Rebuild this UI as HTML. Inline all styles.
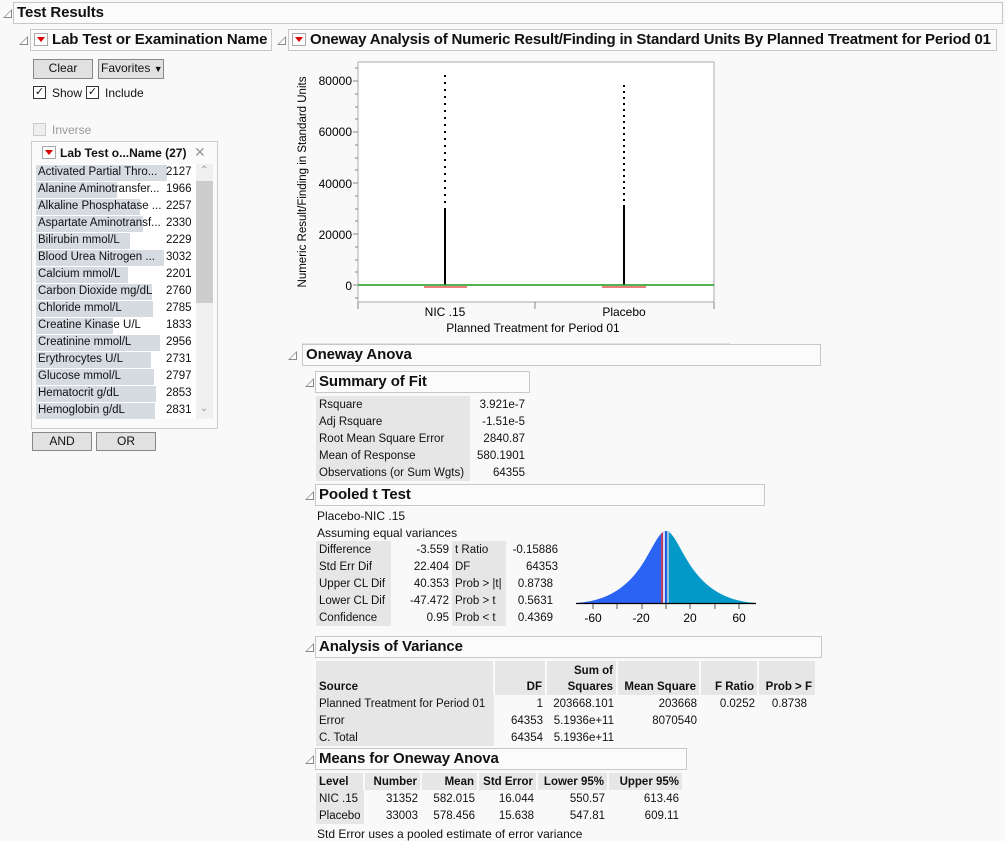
<!DOCTYPE html>
<html><head><meta charset="utf-8"><style>
*{margin:0;padding:0;box-sizing:border-box}
body{width:1005px;height:841px;background:#f9f9f9;font-family:"Liberation Sans",sans-serif;font-size:12px;color:#111;position:relative;overflow:hidden}
.a{position:absolute;white-space:nowrap}
.hb{position:absolute;border:1px solid #c8c8c8;background:#fbfbfb;font-weight:bold;font-size:15px;letter-spacing:-0.1px;line-height:19px;padding-left:3px;white-space:nowrap;overflow:hidden}
.tri{position:absolute;width:0;height:0;border-left:9px solid transparent;border-bottom:9px solid #888}
.tri::after{content:"";position:absolute;left:-7px;top:2px;border-left:6px solid transparent;border-bottom:6px solid #fff}
.rd{display:inline-block;width:14px;height:13px;border:1px solid #aaa;background:#fff;vertical-align:-2px;margin-right:4px;position:relative}
.rd::after{content:"";position:absolute;left:2px;top:3px;border-left:4px solid transparent;border-right:4px solid transparent;border-top:5px solid #d00}
.btn{position:absolute;border:1px solid #888;background:#e1e1e1;text-align:center;line-height:17px}
.cb{position:absolute;width:13px;height:13px;border:1px solid #333;background:#fff;font-size:11px;line-height:11px;text-align:center}
table{position:absolute;border-collapse:collapse;font-size:11.5px;table-layout:fixed}
td{height:17px;padding:0 3px;white-space:nowrap;overflow:hidden}
.g{background:#e6e6e6}
.r{text-align:right}
th{background:#e6e6e6;font-weight:bold;padding:0 3px;text-align:right;vertical-align:bottom;line-height:16px;white-space:nowrap}
.l{font-size:11.5px}
</style></head><body>

<div class="tri" style="left:3px;top:9px"></div>
<div class="hb" style="left:13px;top:2px;width:990px;height:22px">Test Results</div>

<div class="tri" style="left:19px;top:36px"></div>
<div class="hb" style="left:30px;top:29px;width:242px;height:22px"><span class="rd"></span>Lab Test or Examination Name</div>
<div class="tri" style="left:277px;top:36px"></div>
<div class="hb" style="left:288px;top:29px;width:709px;height:22px;letter-spacing:-0.2px"><span class="rd"></span>Oneway Analysis of Numeric Result/Finding in Standard Units By Planned Treatment for Period 01</div>

<div class="btn" style="left:33px;top:59px;width:60px;height:20px">Clear</div>
<div class="btn" style="left:98px;top:59px;width:66px;height:20px;text-align:left;padding-left:2px">Favorites <span style="font-size:9px">▼</span></div>
<div class="cb" style="left:33px;top:86px">✓</div><div class="a" style="left:52px;top:86px">Show</div>
<div class="cb" style="left:86px;top:86px">✓</div><div class="a" style="left:105px;top:86px">Include</div>
<div class="cb" style="left:33px;top:123px;border-color:#ccc;background:#eee"></div><div class="a" style="left:52px;top:123px;color:#999">Inverse</div>

<div class="a" style="left:31px;top:141px;width:187px;height:288px;border:1px solid #ccc;background:#fafafa"></div>
<div class="a" style="left:42px;top:146px;font-weight:bold"><span class="rd"></span>Lab Test o...Name (27)</div>
<div class="a" style="left:194px;top:144px;color:#999;font-size:14px">✕</div>
<div class="a" style="left:35px;top:164px;width:161px;height:255px;background:#fff"></div>
<div class="a" style="left:196px;top:164px;width:17px;height:255px;background:#f0f0f0"></div>
<div class="a" style="left:196px;top:181px;width:17px;height:122px;background:#cdcdcd"></div>
<div class="a" style="left:200px;top:165px;color:#999;font-size:10px">⌃</div>
<div class="a" style="left:200px;top:403px;color:#999;font-size:10px">⌄</div>

<div class="btn" style="left:32px;top:432px;width:60px;height:19px">AND</div>
<div class="btn" style="left:96px;top:432px;width:60px;height:19px">OR</div>

<svg class="a" style="left:290px;top:55px" width="440" height="292" font-family="Liberation Sans" font-size="12">
<rect x="68" y="7" width="356" height="240" fill="#fff" stroke="#aaa"/>
<g stroke="#888">
<line x1="63" y1="26" x2="68" y2="26"/><line x1="63" y1="77" x2="68" y2="77"/><line x1="63" y1="128" x2="68" y2="128"/><line x1="63" y1="179" x2="68" y2="179"/><line x1="63" y1="230" x2="68" y2="230"/>
<line x1="65" y1="13" x2="68" y2="13"/><line x1="65" y1="39" x2="68" y2="39"/><line x1="65" y1="52" x2="68" y2="52"/><line x1="65" y1="64" x2="68" y2="64"/><line x1="65" y1="90" x2="68" y2="90"/><line x1="65" y1="103" x2="68" y2="103"/><line x1="65" y1="115" x2="68" y2="115"/><line x1="65" y1="141" x2="68" y2="141"/><line x1="65" y1="154" x2="68" y2="154"/><line x1="65" y1="166" x2="68" y2="166"/><line x1="65" y1="192" x2="68" y2="192"/><line x1="65" y1="205" x2="68" y2="205"/><line x1="65" y1="217" x2="68" y2="217"/><line x1="65" y1="243" x2="68" y2="243"/>
<line x1="68" y1="247" x2="68" y2="254"/><line x1="245" y1="247" x2="245" y2="254"/><line x1="424" y1="247" x2="424" y2="254"/>
</g>
<g text-anchor="end"><text x="62" y="30">80000</text><text x="62" y="81">60000</text><text x="62" y="133">40000</text><text x="62" y="184">20000</text><text x="62" y="235">0</text></g>
<text transform="translate(16,127) rotate(-90)" text-anchor="middle" font-size="11.5">Numeric Result/Finding in Standard Units</text>
<text x="155" y="261" text-anchor="middle">NIC .15</text><text x="334" y="261" text-anchor="middle">Placebo</text>
<text x="243" y="277" text-anchor="middle">Planned Treatment for Period 01</text>
<line x1="155" y1="230" x2="155" y2="155" stroke="#000" stroke-width="2"/>
<line x1="155" y1="155" x2="155" y2="20" stroke="#000" stroke-width="2" stroke-dasharray="2,5"/>
<line x1="334" y1="230" x2="334" y2="152" stroke="#000" stroke-width="2"/>
<line x1="334" y1="152" x2="334" y2="30" stroke="#000" stroke-width="2" stroke-dasharray="2,4"/>
<line x1="68" y1="230" x2="424" y2="230" stroke="#1a9a1a" stroke-width="1.5"/>
<line x1="134" y1="232" x2="177" y2="232" stroke="#d33" stroke-width="1.2"/>
<line x1="312" y1="232" x2="356" y2="232" stroke="#d33" stroke-width="1.2"/>
<line x1="12" y1="289" x2="440" y2="289" stroke="#ccc"/>
</svg>

<div class="tri" style="left:288px;top:351px"></div>
<div class="hb" style="left:302px;top:344px;width:519px;height:22px">Oneway Anova</div>

<div class="tri" style="left:305px;top:378px"></div>
<div class="hb" style="left:315px;top:371px;width:215px;height:22px">Summary of Fit</div>
<table style="left:316px;top:396px;width:212px">
<col style="width:154px"><col style="width:58px">
<tr><td class="g">Rsquare</td><td class="r">3.921e-7</td></tr>
<tr><td class="g">Adj Rsquare</td><td class="r">-1.51e-5</td></tr>
<tr><td class="g">Root Mean Square Error</td><td class="r">2840.87</td></tr>
<tr><td class="g">Mean of Response</td><td class="r">580.1901</td></tr>
<tr><td class="g">Observations (or Sum Wgts)</td><td class="r">64355</td></tr>
</table>

<div class="tri" style="left:305px;top:491px"></div>
<div class="hb" style="left:315px;top:484px;width:450px;height:22px">Pooled t Test</div>
<div class="a" style="left:317px;top:509px">Placebo-NIC .15</div>
<div class="a" style="left:317px;top:526px">Assuming equal variances</div>
<table style="left:316px;top:541px;width:245px">
<col style="width:75px"><col style="width:61px"><col style="width:54px"><col style="width:55px">
<tr><td class="g">Difference</td><td class="r">-3.559</td><td class="g">t Ratio</td><td class="r">-0.15886</td></tr>
<tr><td class="g">Std Err Dif</td><td class="r">22.404</td><td class="g">DF</td><td class="r">64353</td></tr>
<tr><td class="g">Upper CL Dif</td><td class="r">40.353</td><td class="g">Prob &gt; |t|</td><td class="r" style="padding-right:8px">0.8738</td></tr>
<tr><td class="g">Lower CL Dif</td><td class="r">-47.472</td><td class="g">Prob &gt; t</td><td class="r" style="padding-right:8px">0.5631</td></tr>
<tr><td class="g">Confidence</td><td class="r">0.95</td><td class="g">Prob &lt; t</td><td class="r" style="padding-right:8px">0.4369</td></tr>
</table>
<svg class="a" style="left:570px;top:525px" width="200" height="100" font-family="Liberation Sans" font-size="12">
<defs><clipPath id="c"><path d="M6,78 C40,76 60,60 75,35 C85,18 90,6 96,6 C102,6 107,18 117,35 C132,60 152,76 186,78 Z"/></clipPath></defs>
<g clip-path="url(#c)"><rect x="0" y="0" width="96" height="80" fill="#2b63f5"/><rect x="96" y="0" width="100" height="80" fill="#0599c9"/>
<line x1="92" y1="0" x2="92" y2="80" stroke="#e33" stroke-width="1.5"/><line x1="94" y1="0" x2="94" y2="80" stroke="#fff" stroke-width="1.5"/><line x1="96" y1="0" x2="96" y2="80" stroke="#2244dd" stroke-width="1"/><line x1="98" y1="0" x2="98" y2="80" stroke="#cce" stroke-width="1.5"/></g>
<line x1="6" y1="78.5" x2="186" y2="78.5" stroke="#000" stroke-width="1.3"/>
<g stroke="#555"><line x1="23" y1="79" x2="23" y2="84"/><line x1="47" y1="79" x2="47" y2="84"/><line x1="72" y1="79" x2="72" y2="84"/><line x1="96" y1="79" x2="96" y2="84"/><line x1="120" y1="79" x2="120" y2="84"/><line x1="145" y1="79" x2="145" y2="84"/><line x1="169" y1="79" x2="169" y2="84"/></g>
<g text-anchor="middle"><text x="23" y="97">-60</text><text x="71" y="97">-20</text><text x="120" y="97">20</text><text x="169" y="97">60</text></g>
</svg>

<div class="tri" style="left:305px;top:643px"></div>
<div class="hb" style="left:315px;top:636px;width:507px;height:22px">Analysis of Variance</div>
<table style="left:316px;top:661px;width:499px">
<col style="width:178px"><col style="width:52px"><col style="width:71px"><col style="width:83px"><col style="width:58px"><col style="width:57px">
<tr><th style="height:34px;text-align:left;border-right:2px solid #f9f9f9">Source</th><th style="border-right:2px solid #f9f9f9">DF</th><th style="border-right:2px solid #f9f9f9">Sum of<br>Squares</th><th style="border-right:2px solid #f9f9f9">Mean Square</th><th style="border-right:2px solid #f9f9f9">F Ratio</th><th>Prob &gt; F</th></tr>
<tr><td class="g">Planned Treatment for Period 01</td><td class="r">1</td><td class="r">203668.101</td><td class="r">203668</td><td class="r">0.0252</td><td class="r" style="padding-right:8px">0.8738</td></tr>
<tr><td class="g">Error</td><td class="r">64353</td><td class="r">5.1936e+11</td><td class="r">8070540</td><td></td><td></td></tr>
<tr><td class="g">C. Total</td><td class="r">64354</td><td class="r">5.1936e+11</td><td></td><td></td><td></td></tr>
</table>

<div class="tri" style="left:305px;top:755px"></div>
<div class="hb" style="left:315px;top:748px;width:372px;height:22px">Means for Oneway Anova</div>
<table style="left:316px;top:773px;width:366px">
<col style="width:48px"><col style="width:57px"><col style="width:57px"><col style="width:59px"><col style="width:71px"><col style="width:74px">
<tr><th style="height:17px;text-align:left;border-right:2px solid #f9f9f9">Level</th><th style="border-right:2px solid #f9f9f9">Number</th><th style="border-right:2px solid #f9f9f9">Mean</th><th style="border-right:2px solid #f9f9f9">Std Error</th><th style="border-right:2px solid #f9f9f9">Lower 95%</th><th>Upper 95%</th></tr>
<tr><td class="g">NIC .15</td><td class="r">31352</td><td class="r">582.015</td><td class="r">16.044</td><td class="r">550.57</td><td class="r">613.46</td></tr>
<tr><td class="g">Placebo</td><td class="r">33003</td><td class="r">578.456</td><td class="r">15.638</td><td class="r">547.81</td><td class="r">609.11</td></tr>
</table>
<div class="a" style="left:317px;top:827px">Std Error uses a pooled estimate of error variance</div>

<div class="l" style="position:absolute;left:0;top:0">
<div class="a" style="left:36px;top:165px;width:131px;height:16px;background:#d6dbe2"></div><div class="a" style="left:38px;top:166px">Activated Partial Thro...</div><div class="a" style="left:166px;top:166px">2127</div>
<div class="a" style="left:36px;top:182px;width:81px;height:16px;background:#d6dbe2"></div><div class="a" style="left:38px;top:183px">Alanine Aminotransfer...</div><div class="a" style="left:166px;top:183px">1966</div>
<div class="a" style="left:36px;top:199px;width:104px;height:16px;background:#d6dbe2"></div><div class="a" style="left:38px;top:200px">Alkaline Phosphatase ...</div><div class="a" style="left:166px;top:200px">2257</div>
<div class="a" style="left:36px;top:216px;width:107px;height:16px;background:#d6dbe2"></div><div class="a" style="left:38px;top:217px">Aspartate Aminotransf...</div><div class="a" style="left:166px;top:217px">2330</div>
<div class="a" style="left:36px;top:233px;width:94px;height:16px;background:#d6dbe2"></div><div class="a" style="left:38px;top:234px">Bilirubin mmol/L</div><div class="a" style="left:166px;top:234px">2229</div>
<div class="a" style="left:36px;top:250px;width:128px;height:16px;background:#d6dbe2"></div><div class="a" style="left:38px;top:251px">Blood Urea Nitrogen ...</div><div class="a" style="left:166px;top:251px">3032</div>
<div class="a" style="left:36px;top:267px;width:92px;height:16px;background:#d6dbe2"></div><div class="a" style="left:38px;top:268px">Calcium mmol/L</div><div class="a" style="left:166px;top:268px">2201</div>
<div class="a" style="left:36px;top:284px;width:116px;height:16px;background:#d6dbe2"></div><div class="a" style="left:38px;top:285px">Carbon Dioxide mg/dL</div><div class="a" style="left:166px;top:285px">2760</div>
<div class="a" style="left:36px;top:301px;width:117px;height:16px;background:#d6dbe2"></div><div class="a" style="left:38px;top:302px">Chloride mmol/L</div><div class="a" style="left:166px;top:302px">2785</div>
<div class="a" style="left:36px;top:318px;width:77px;height:16px;background:#d6dbe2"></div><div class="a" style="left:38px;top:319px">Creatine Kinase U/L</div><div class="a" style="left:166px;top:319px">1833</div>
<div class="a" style="left:36px;top:335px;width:124px;height:16px;background:#d6dbe2"></div><div class="a" style="left:38px;top:336px">Creatinine mmol/L</div><div class="a" style="left:166px;top:336px">2956</div>
<div class="a" style="left:36px;top:352px;width:115px;height:16px;background:#d6dbe2"></div><div class="a" style="left:38px;top:353px">Erythrocytes U/L</div><div class="a" style="left:166px;top:353px">2731</div>
<div class="a" style="left:36px;top:369px;width:118px;height:16px;background:#d6dbe2"></div><div class="a" style="left:38px;top:370px">Glucose mmol/L</div><div class="a" style="left:166px;top:370px">2797</div>
<div class="a" style="left:36px;top:386px;width:120px;height:16px;background:#d6dbe2"></div><div class="a" style="left:38px;top:387px">Hematocrit g/dL</div><div class="a" style="left:166px;top:387px">2853</div>
<div class="a" style="left:36px;top:403px;width:119px;height:16px;background:#d6dbe2"></div><div class="a" style="left:38px;top:404px">Hemoglobin g/dL</div><div class="a" style="left:166px;top:404px">2831</div>
</div>
</body></html>
